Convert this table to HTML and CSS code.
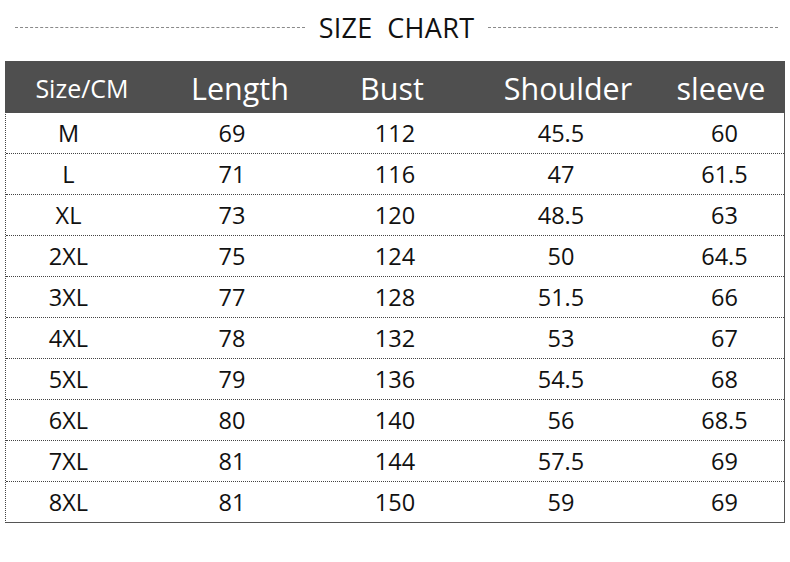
FILE: index.html
```html
<!DOCTYPE html>
<html>
<head>
<meta charset="utf-8">
<link rel="stylesheet" href="styles.css">
</head>
<body>
<div class="page">
  <div class="title-row">
    <span class="rule rule-left"></span>
    <h1 class="title">SIZE&nbsp;&nbsp;CHART</h1>
    <span class="rule rule-right"></span>
  </div>
  <div class="chart">
    <div class="row head">
      <div class="cell h1">Size/CM</div>
      <div class="cell h2">Length</div>
      <div class="cell h3">Bust</div>
      <div class="cell h4">Shoulder</div>
      <div class="cell h5">sleeve</div>
    </div>
    <div class="row"><div class="cell">M</div><div class="cell">69</div><div class="cell">112</div><div class="cell">45.5</div><div class="cell">60</div></div>
    <div class="row"><div class="cell">L</div><div class="cell">71</div><div class="cell">116</div><div class="cell">47</div><div class="cell">61.5</div></div>
    <div class="row"><div class="cell">XL</div><div class="cell">73</div><div class="cell">120</div><div class="cell">48.5</div><div class="cell">63</div></div>
    <div class="row"><div class="cell">2XL</div><div class="cell">75</div><div class="cell">124</div><div class="cell">50</div><div class="cell">64.5</div></div>
    <div class="row"><div class="cell">3XL</div><div class="cell">77</div><div class="cell">128</div><div class="cell">51.5</div><div class="cell">66</div></div>
    <div class="row"><div class="cell">4XL</div><div class="cell">78</div><div class="cell">132</div><div class="cell">53</div><div class="cell">67</div></div>
    <div class="row"><div class="cell">5XL</div><div class="cell">79</div><div class="cell">136</div><div class="cell">54.5</div><div class="cell">68</div></div>
    <div class="row"><div class="cell">6XL</div><div class="cell">80</div><div class="cell">140</div><div class="cell">56</div><div class="cell">68.5</div></div>
    <div class="row"><div class="cell">7XL</div><div class="cell">81</div><div class="cell">144</div><div class="cell">57.5</div><div class="cell">69</div></div>
    <div class="row last"><div class="cell">8XL</div><div class="cell">81</div><div class="cell">150</div><div class="cell">59</div><div class="cell">69</div></div>
  </div>
</div>
</body>
</html>
```

FILE: styles.css
```css
html, body {
  margin: 0;
  padding: 0;
  background: #ffffff;
}

.page {
  width: 790px;
  height: 562px;
  font-family: "Open Sans", "Noto Sans", sans-serif;
  color: #111111;
}

.title-row {
  display: flex;
  align-items: center;
  height: 55px;
  padding: 0 12px 0 15px;
  gap: 14px;
}

.rule {
  flex: 1;
  height: 0;
  border-top: 1px dashed #8a8a8a;
}

.title {
  margin: 0;
  font-weight: 400;
  font-size: 27px;
  letter-spacing: 0.3px;
  color: #111111;
  line-height: 1;
  padding-bottom: 1px;
}

.chart {
  margin: 6px 0 0 5px;
  width: 780px;
  border-left: 1px dotted #444;
  border-right: 1px solid #555;
  border-bottom: 1px solid #555;
  box-sizing: border-box;
}

.row {
  display: grid;
  grid-template-columns: 125px 202px 124px 208px 119px;
  height: 41px;
  border-bottom: 1px dotted #444;
  box-sizing: border-box;
}

.row.last {
  border-bottom: none;
  height: 40px;
}

.cell {
  display: flex;
  align-items: center;
  justify-content: center;
  font-size: 23.5px;
  line-height: 1;
  padding-top: 1px;
}

.head {
  height: 52px;
  background: #4f4f4f;
  border-bottom: none;
  margin-left: -1px;
  margin-right: -1px;
  grid-template-columns: 126px 202px 124px 208px 120px;
}

.head .cell {
  color: #ffffff;
  font-size: 30.5px;
  padding-top: 2px;
}

.head .h1 {
  font-size: 25px;
  padding-left: 28px;
  padding-top: 3px;
}

.head .h2 { padding-left: 16px; }
.head .h3 { padding-right: 6px; }
.head .h4 { padding-left: 14px; }
.head .h5 { padding-right: 8px; }
```
